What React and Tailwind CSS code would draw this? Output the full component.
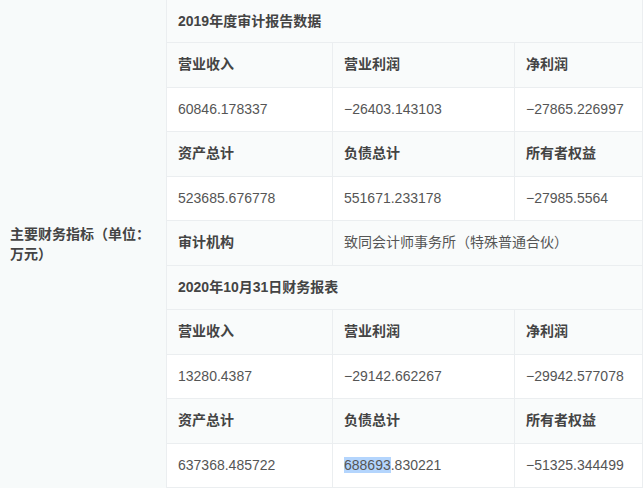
import React from "react";

const FONT = {
  fontFamily: '"Liberation Sans", "Noto Sans CJK SC", sans-serif',
};

// ------------------ Table data ------------------
const sections = [
  {
    title: "2019年度审计报告数据",
    rows: [
      { type: "label", cells: ["营业收入", "营业利润", "净利润"] },
      { type: "value", cells: ["60846.178337", "−26403.143103", "−27865.226997"] },
      { type: "label", cells: ["资产总计", "负债总计", "所有者权益"] },
      { type: "value", cells: ["523685.676778", "551671.233178", "−27985.5564"] },
      { type: "auditor", cells: ["审计机构", "致同会计师事务所（特殊普通合伙）"] },
    ],
  },
  {
    title: "2020年10月31日财务报表",
    rows: [
      { type: "label", cells: ["营业收入", "营业利润", "净利润"] },
      { type: "value", cells: ["13280.4387", "−29142.662267", "−29942.577078"] },
      { type: "label", cells: ["资产总计", "负债总计", "所有者权益"] },
      { type: "value", cells: ["637368.485722", "SELECTED", "−51325.344499"] },
    ],
  },
];

const cellBase = "flex items-center border-b border-r border-[#ebeef0] pl-[11px] text-[14px]";

const Cell = ({ type, children, span }) => {
  const tone =
    type === "value"
      ? "bg-white text-[#555] font-normal"
      : "bg-[#f9fbfb] text-[#444] font-semibold";
  return <div className={`${cellBase} ${tone} ${span || ""}`}>{children}</div>;
};

const App = () => {
  return (
    <div
      className="w-[643px] h-[488px] overflow-hidden bg-white"
      style={FONT}
    >
      <div className="grid grid-cols-[167px_166px_182px_1fr] grid-rows-[43px_repeat(10,44.5px)]">
        {/* Left merged cell */}
        <div className="row-span-11 flex items-center border-r border-[#ebeef0] bg-[#f7fafa] pl-[10px] pr-[10px] text-[14px] font-semibold leading-[20px] text-[#444]">
          主要财务指标（单位：万元）
        </div>

        {sections.map((sec) => (
          <React.Fragment key={sec.title}>
            <Cell type="title" span="col-span-3">
              {sec.title}
            </Cell>
            {sec.rows.map((row, ri) =>
              row.type === "auditor" ? (
                <React.Fragment key={ri}>
                  <Cell type="label">{row.cells[0]}</Cell>
                  <div className={`${cellBase} col-span-2 bg-[#f9fbfb] text-[#555]`}>
                    {row.cells[1]}
                  </div>
                </React.Fragment>
              ) : (
                row.cells.map((c, ci) => (
                  <Cell key={`${ri}-${ci}`} type={row.type}>
                    {c === "SELECTED" ? (
                      <span>
                        <span className="bg-[#b4d5fd]">688693</span>.830221
                      </span>
                    ) : (
                      c
                    )}
                  </Cell>
                ))
              )
            )}
          </React.Fragment>
        ))}
      </div>
    </div>
  );
};

export default App;
